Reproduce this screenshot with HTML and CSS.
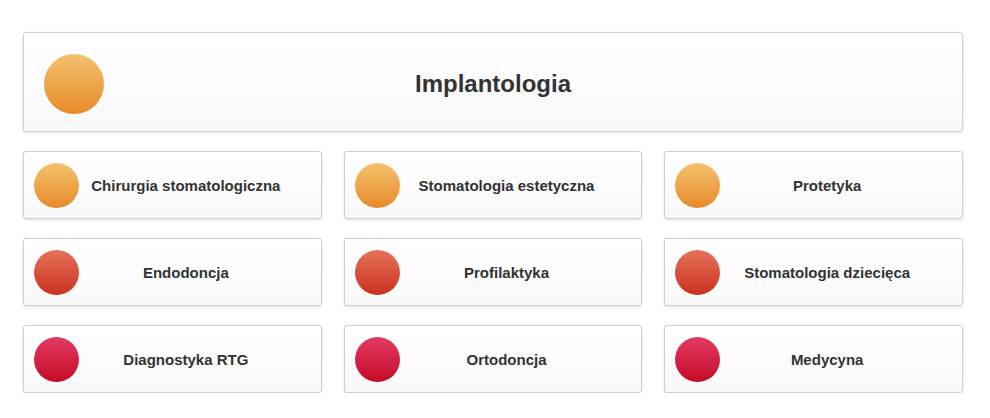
FILE: index.html
```html
<!DOCTYPE html>
<html lang="pl">
<head>
<meta charset="utf-8">
<title>Usługi</title>
<link rel="stylesheet" href="styles.css">
</head>
<body>
<div class="wrap">
  <a class="card card-big">
    <span class="dot dot-orange"></span>
    <span class="label">Implantologia</span>
  </a>
  <div class="grid">
    <a class="card"><span class="dot dot-orange"></span><span class="label">Chirurgia stomatologiczna</span></a>
    <a class="card"><span class="dot dot-orange"></span><span class="label">Stomatologia estetyczna</span></a>
    <a class="card"><span class="dot dot-orange"></span><span class="label">Protetyka</span></a>
    <a class="card"><span class="dot dot-red"></span><span class="label">Endodoncja</span></a>
    <a class="card"><span class="dot dot-red"></span><span class="label">Profilaktyka</span></a>
    <a class="card"><span class="dot dot-red"></span><span class="label">Stomatologia dziecięca</span></a>
    <a class="card"><span class="dot dot-crimson"></span><span class="label">Diagnostyka RTG</span></a>
    <a class="card"><span class="dot dot-crimson"></span><span class="label">Ortodoncja</span></a>
    <a class="card"><span class="dot dot-crimson"></span><span class="label">Medycyna</span></a>
  </div>
</div>
</body>
</html>
```
FILE: styles.css
```css
html, body {
  margin: 0;
  padding: 0;
  background: #ffffff;
}
body {
  font-family: "Liberation Sans", Arial, sans-serif;
  color: #333333;
}
.wrap {
  width: 940px;
  margin-left: 23px;
  padding-top: 32px;
  display: flex;
  flex-direction: column;
  gap: 19px;
}
.grid {
  display: grid;
  grid-template-columns: 1fr 1fr 1fr;
  column-gap: 22px;
  row-gap: 19px;
}
.card {
  box-sizing: border-box;
  height: 68px;
  display: flex;
  align-items: center;
  border: 1px solid #cfcfcf;
  border-radius: 3px;
  background: linear-gradient(#ffffff, #f9f9f9);
  box-shadow: 0 1px 3px rgba(0, 0, 0, 0.12);
  text-decoration: none;
  color: #333333;
  padding-left: 10px;
  padding-right: 28px;
}
.card-big {
  height: 100px;
  padding-top: 3px;
  padding-left: 20px;
  padding-right: 80px;
}
.dot {
  flex: none;
  width: 45px;
  height: 45px;
  border-radius: 50%;
}
.card-big .dot {
  width: 60px;
  height: 60px;
}
.dot-orange {
  background: linear-gradient(#f3c26f, #e78a29);
}
.dot-red {
  background: linear-gradient(#e57259, #cb3121);
}
.dot-crimson {
  background: linear-gradient(#e33b62, #c50a28);
}
.label {
  flex: 1;
  text-align: center;
  font-weight: bold;
  font-size: 15px;
}
.card-big .label {
  font-size: 24px;
}
```
